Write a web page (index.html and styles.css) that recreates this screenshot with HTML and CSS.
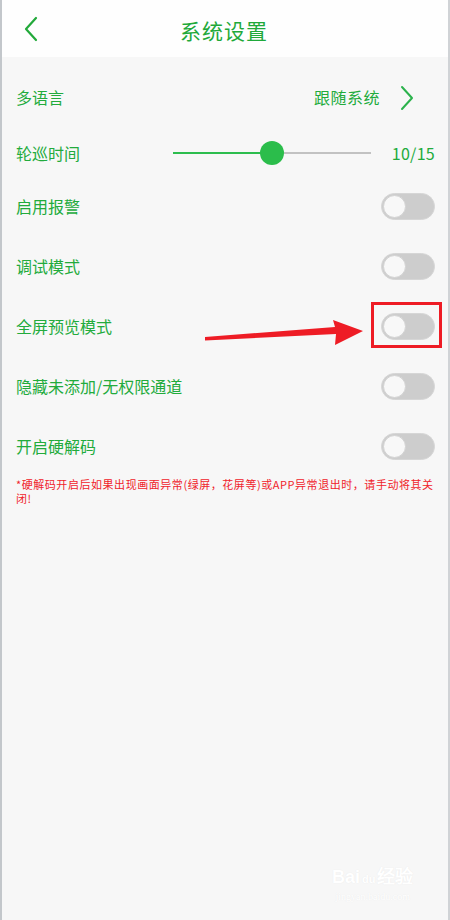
FILE: index.html
```html
<!DOCTYPE html>
<html lang="zh-CN">
<head>
<meta charset="utf-8">
<title>系统设置</title>
<link rel="stylesheet" href="styles.css">
</head>
<body>
<div class="screen">
  <header class="topbar">
    <svg class="back" width="14" height="26" viewBox="0 0 14 26"><polyline points="12,2 2,13 12,24" fill="none" stroke="#22a93a" stroke-width="2.2" stroke-linecap="round" stroke-linejoin="round"/></svg>
    <h1 class="title">系统设置</h1>
  </header>
  <main class="content">
    <div class="row row-lang">
      <span class="label">多语言</span>
      <span class="value-link">跟随系统
        <svg class="chev" width="14" height="26" viewBox="0 0 14 26"><polyline points="2,2 12,13 2,24" fill="none" stroke="#2bb24c" stroke-width="2" stroke-linecap="round" stroke-linejoin="round"/></svg>
      </span>
    </div>
    <div class="row row-slider">
      <span class="label slider-label">轮巡时间</span>
      <div class="slider">
        <div class="track-fill" style="width: 50%"></div>
        <div class="thumb" style="left: 50%"></div>
      </div>
      <span class="slider-value">10/15</span>
    </div>
    <div class="row row-toggle"><span class="label">启用报警</span><span class="toggle"></span></div>
    <div class="row row-toggle"><span class="label">调试模式</span><span class="toggle"></span></div>
    <div class="row row-toggle"><span class="label">全屏预览模式</span><span class="toggle"></span></div>
    <div class="row row-toggle"><span class="label">隐藏未添加/无权限通道</span><span class="toggle"></span></div>
    <div class="row row-toggle"><span class="label">开启硬解码</span><span class="toggle"></span></div>
    <p class="note">*硬解码开启后如果出现画面异常(绿屏，花屏等)或APP异常退出时，请手动将其关闭!</p>
  </main>

  <svg class="annotation" width="450" height="920" viewBox="0 0 450 920">
    <rect x="372.5" y="303.5" width="68" height="43" fill="none" stroke="#ee1c25" stroke-width="3"/>
    <polygon points="205,337 205,340.5 336,334 335,345 363,331 333,320 335,327" fill="#ee1c25"/>
  </svg>

  <div class="watermark">
    <span class="wm-brand">Bai<span class="wm-paw">du</span>经验</span>
    <span class="wm-url">jingyan.baidu.com</span>
  </div>
</div>
</body>
</html>
```

FILE: styles.css
```css
html, body {
  margin: 0;
  padding: 0;
}
body {
  width: 450px;
  height: 920px;
  overflow: hidden;
  font-family: "Noto Sans CJK SC", "Noto Sans", sans-serif;
  background: #f7f7f7;
}
.screen {
  position: relative;
  width: 450px;
  height: 920px;
  box-sizing: border-box;
  border-left: 2px solid #c3c7cb;
  border-right: 2px solid #d0d3d6;
  background: #f7f7f7;
  display: flex;
  flex-direction: column;
}
.topbar {
  height: 57px;
  background: #fefefe;
  display: flex;
  align-items: center;
  justify-content: center;
  position: relative;
  flex-shrink: 0;
}
.back {
  position: absolute;
  left: 22px;
  top: 16px;
}
.title {
  margin: 0;
  font-size: 21px;
  font-weight: 400;
  color: #1fa93a;
  letter-spacing: 1px;
  line-height: 1;
  margin-left: -2px;
  margin-top: 3px;
}
.content {
  padding: 7px 13px 0 14px;
  display: flex;
  flex-direction: column;
}
.row {
  display: flex;
  align-items: center;
  justify-content: space-between;
}
.label {
  font-size: 16px;
  color: #22ab3c;
  line-height: 1;
}
.row-lang {
  height: 66px;
}
.value-link {
  display: flex;
  align-items: center;
  gap: 20px;
  font-size: 16px;
  color: #22ab3c;
  margin-right: 21px;
  line-height: 1;
  letter-spacing: 0.5px;
}
.chev {
  margin-top: 1px;
}
.row-slider {
  height: 46px;
  justify-content: flex-start;
}
.slider-label {
  width: 157px;
  flex-shrink: 0;
}
.slider {
  position: relative;
  width: 202px;
  height: 2px;
  background: #c2c2c2;
}
.track-fill {
  height: 2px;
  background: #2dbd4e;
}
.thumb {
  position: absolute;
  top: -11px;
  width: 24px;
  height: 24px;
  margin-left: -12px;
  border-radius: 50%;
  background: #2bbd4b;
}
.slider-value {
  margin-left: 21px;
  font-size: 16px;
  color: #22ab3c;
  line-height: 1;
  letter-spacing: 0.3px;
}
.row-toggle {
  height: 60px;
}
.toggle {
  position: relative;
  width: 54px;
  height: 27px;
  box-sizing: border-box;
  border-radius: 14px;
  background: #cdcdcd;
  border: 1px solid #d6d6d6;
}
.toggle::after {
  content: "";
  position: absolute;
  left: 1px;
  top: 1px;
  width: 21px;
  height: 21px;
  border-radius: 50%;
  background: #f8f8f8;
  border: 1px solid #d2d2d2;
}
.note {
  margin: 0;
  padding-top: 1px;
  font-size: 11px;
  line-height: 14px;
  color: #f0232b;
  letter-spacing: 0.55px;
  max-width: 420px;
}
.annotation {
  position: absolute;
  left: -2px;
  top: 0;
  pointer-events: none;
}
.watermark {
  position: absolute;
  left: 330px;
  top: 868px;
  display: flex;
  flex-direction: column;
  align-items: center;
  color: #ffffff;
  text-shadow: 0 0 1px #e6e6e6;
  pointer-events: none;
}
.wm-brand {
  font-family: "Liberation Sans", sans-serif;
  font-size: 18px;
  font-weight: 700;
  line-height: 1;
}
.wm-paw {
  font-size: 11px;
  margin: 0 2px;
}
.wm-url {
  font-family: "Liberation Serif", serif;
  font-size: 10px;
  line-height: 1;
  margin-top: 6px;
}
```
